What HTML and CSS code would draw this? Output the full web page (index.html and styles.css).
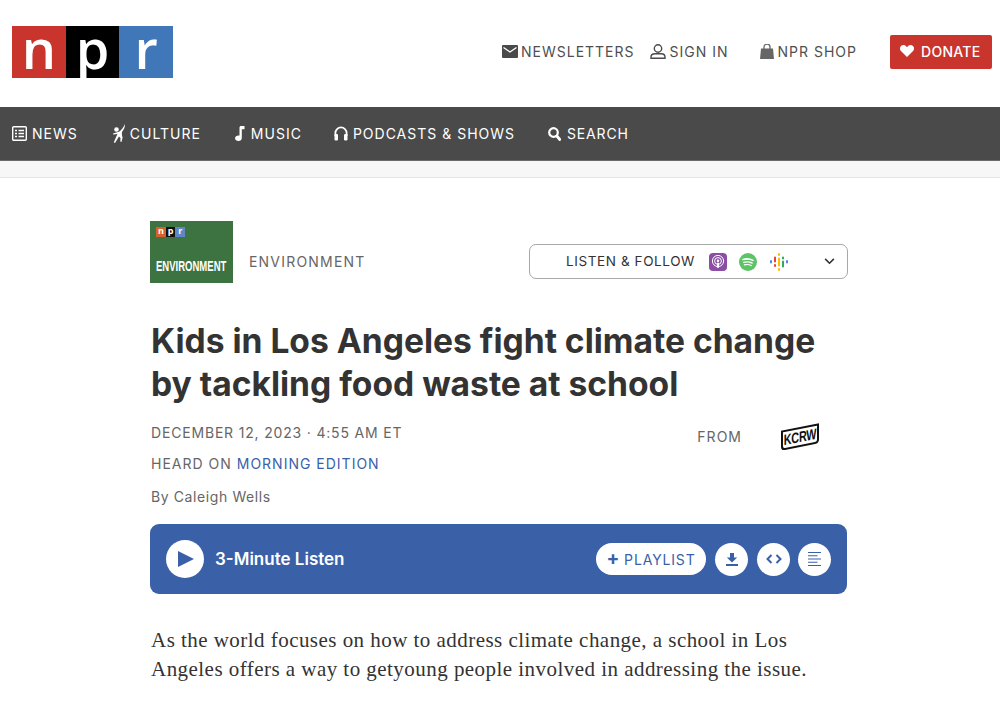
FILE: index.html
```html
<!DOCTYPE html>
<html lang="en">
<head>
<meta charset="utf-8">
<title>Kids in Los Angeles fight climate change by tackling food waste at school</title>
<link rel="stylesheet" href="styles.css">
</head>
<body>
<header class="top">
  <a class="logo"><span class="l-n">n</span><span class="l-p">p</span><span class="l-r">r</span></a>
  <nav class="util">
    <a class="util-link nl"><svg class="ui" viewBox="0 0 16 13" width="16" height="13"><path fill="#4a4a4a" d="M1 0h14a1 1 0 0 1 1 1v11a1 1 0 0 1-1 1H1a1 1 0 0 1-1-1V1a1 1 0 0 1 1-1z"/><path fill="none" stroke="#fff" stroke-width="1.400" d="M1.500 2.500 8 7l6.500-4.500"/></svg>NEWSLETTERS</a>
    <a class="util-link si"><svg class="ui" viewBox="0 0 16 15" width="16" height="15"><circle cx="8" cy="4.500" r="3.700" fill="none" stroke="#4a4a4a" stroke-width="1.400"/><path fill="none" stroke="#4a4a4a" stroke-width="1.400" d="M1 14.200v-1.200c0-2 1.800-3.300 3.800-3.300h6.400c2 0 3.800 1.300 3.800 3.300v1.200z"/></svg>SIGN IN</a>
    <a class="util-link sh"><svg class="ui" viewBox="0 0 14 15" width="14" height="15"><path fill="#666" d="M1 4.500h12l1 10.500H0z"/><path fill="none" stroke="#666" stroke-width="1.300" d="M4 6V3a3 3 0 0 1 6 0v3"/></svg>NPR SHOP</a>
    <a class="donate"><svg viewBox="0 0 14 12" width="14" height="12"><path fill="#fff" d="M7 12 1.200 6.300C-.4 4.700-.4 2.300 1 1c1.500-1.400 3.800-1.300 5.100.2L7 2.200l.9-1C9.200-.3 11.500-.4 13 1c1.400 1.300 1.400 3.700-.2 5.300z"/></svg>DONATE</a>
  </nav>
</header>
<nav class="main">
  <a class="m-link news"><svg viewBox="0 0 15 15" width="15" height="15"><rect x=".7" y=".7" width="13.600" height="13.600" rx="1" fill="none" stroke="#fff" stroke-width="1.400"/><path stroke="#fff" stroke-width="1.500" d="M3 4.500h2M6.500 4.500H12M3 7.500h2M6.500 7.500H12M3 10.500h2M6.500 10.500H12"/></svg>NEWS</a>
  <a class="m-link culture"><svg viewBox="0 0 13 19" width="13" height="19"><circle cx="3.500" cy="5.500" r="2.300" fill="#fff"/><path fill="#fff" d="M12 0c0 3-1 5.500-3 8-.3 2 0 4 .6 5.500L8.500 18l-1.200-.5.200-3.500L6 12.500 2 19l-1.200-.7L4 11l.5-1-4.300.5L0 9.500l6-1.700C8 6.500 10.500 3.500 12 0z"/></svg>CULTURE</a>
  <a class="m-link music"><svg viewBox="0 0 10 15" width="10" height="15"><path fill="#fff" d="M4.500 1.500C4.500.6 5.100 0 6 0h3.500v3.200H6.800v8.700c0 1.800-1.400 3.100-3.300 3.100C1.500 15 0 13.900 0 12.300s1.700-2.800 3.500-2.800c.4 0 .7 0 1 .1z"/></svg>MUSIC</a>
  <a class="m-link pod"><svg viewBox="0 0 14 15" width="14" height="15"><path fill="none" stroke="#fff" stroke-width="1.800" d="M1.400 10V7a5.600 5.600 0 0 1 11.200 0v3"/><rect x=".5" y="8" width="3.500" height="6.500" rx="1.200" fill="#fff"/><rect x="10" y="8" width="3.500" height="6.500" rx="1.200" fill="#fff"/></svg>PODCASTS &amp; SHOWS</a>
  <a class="m-link search"><svg viewBox="0 0 13 14" width="13" height="14"><circle cx="5.500" cy="5.500" r="4.300" fill="none" stroke="#fff" stroke-width="2.200"/><path stroke="#fff" stroke-width="2.800" stroke-linecap="round" d="m8.800 9 3 3.500"/></svg>SEARCH</a>
</nav>
<div class="strip"></div>
<main class="article">
  <div class="slug-row">
    <a class="badge">
      <span class="mini"><i class="m-n">n</i><i class="m-p">p</i><i class="m-r">r</i></span>
      <span class="badge-t">ENVIRONMENT</span>
    </a>
    <span class="slug">ENVIRONMENT</span>
    <button class="listen">
      <span class="listen-t">LISTEN &amp; FOLLOW</span>
      <svg class="pod-i" viewBox="0 0 18 18" width="18" height="18"><rect width="18" height="18" rx="4" fill="#8a4fa3"/><circle cx="9" cy="8" r="5.600" fill="none" stroke="#fff" stroke-width="1"/><circle cx="9" cy="8" r="3.400" fill="none" stroke="#fff" stroke-width="1"/><circle cx="9" cy="7.700" r="1.300" fill="#fff"/><rect x="8" y="9.500" width="2" height="5.500" rx="1" fill="#fff"/></svg>
      <svg class="spot-i" viewBox="0 0 18 18" width="18" height="18"><circle cx="9" cy="9" r="9" fill="#5ec269"/><path fill="none" stroke="#fff" stroke-width="1.600" stroke-linecap="round" d="M4 6.500c3.500-1 7-.7 10 .9"/><path fill="none" stroke="#fff" stroke-width="1.300" stroke-linecap="round" d="M4.700 9.300c3-.8 6-.5 8.500.8"/><path fill="none" stroke="#fff" stroke-width="1.100" stroke-linecap="round" d="M5.300 11.900c2.500-.6 5-.4 7 .7"/></svg>
      <svg class="goog-i" viewBox="0 0 20 18" width="20" height="18"><path stroke-width="2" stroke-linecap="round" fill="none" stroke="#4a8af0" d="M2 8v1.500"/><path stroke-width="2" stroke-linecap="round" fill="none" stroke="#ea4335" d="M6 4.500v4M6 12v1"/><path stroke-width="2" stroke-linecap="round" fill="none" stroke="#fbbc04" d="M10 1v1M10 5.500v7M10 16v1"/><path stroke-width="2" stroke-linecap="round" fill="none" stroke="#34a853" d="M14 4.500v1M14 8.500v5"/><path stroke-width="2" stroke-linecap="round" fill="none" stroke="#4a8af0" d="M18 8v1.500"/></svg>
      <svg class="chev" viewBox="0 0 12 8" width="11" height="7"><path fill="none" stroke="#333" stroke-width="1.800" d="m1 1 5 5 5-5"/></svg>
    </button>
  </div>
  <h1 class="headline">Kids in Los Angeles fight climate change by tackling food waste at school</h1>
  <div class="meta-row">
    <div class="meta">
      <div class="date">DECEMBER 12, 2023 · 4:55 AM ET</div>
      <div class="heard">HEARD ON <a class="me">MORNING EDITION</a></div>
      <div class="by">By Caleigh Wells</div>
    </div>
    <div class="from">
      <span class="from-t">FROM</span>
      <span class="kcrw"><span class="kcrw-t">KCRW</span></span>
    </div>
  </div>
  <div class="player">
    <button class="play"><svg viewBox="0 0 16 16" width="16" height="16"><path fill="#3a61a8" d="M0 0l16 8L0 16z"/></svg></button>
    <span class="dur">3-Minute Listen</span>
    <button class="pill"><span class="plus">+</span> PLAYLIST</button>
    <button class="round"><svg viewBox="0 0 12 13" width="12" height="13"><path fill="#3a61a8" d="M4 0h4v4.500h3.200L6 9.500.8 4.500H4z"/><rect y="11" width="12" height="2" fill="#3a61a8"/></svg></button>
    <button class="round round-b"><svg viewBox="0 0 16 10" width="16" height="10"><path fill="none" stroke="#3a61a8" stroke-width="2" d="M5.500 1 1.500 5l4 4M10.500 1l4 4-4 4"/></svg></button>
    <button class="round round-c"><svg viewBox="0 0 13 14" width="13" height="14"><path stroke="#3a61a8" stroke-width="1" d="M0 .5h13M0 3.750h9.500M0 7h13M0 10.250h9.500M0 13.500h13"/></svg></button>
  </div>
  <p class="lede">As the world focuses on how to address climate change, a school in Los Angeles offers a way to getyoung people involved in addressing the issue.</p>
</main>
</body>
</html>
```
FILE: styles.css
```css
* { box-sizing: border-box; }
html, body { margin: 0; padding: 0; background: #fff; overflow: hidden; }
body { font-family: Inter, "Liberation Sans", sans-serif; color: #333; height: 704px; }
a { text-decoration: none; color: inherit; }
button { font: inherit; border: 0; padding: 0; cursor: pointer; }
svg { display: block; flex: none; }

.top { height: 107px; display: flex; align-items: flex-start; justify-content: space-between; padding: 26px 8px 0 12px; }
.logo { display: flex; height: 52px; width: 161px; }
.logo span { flex: 1; color: #fff; font: 600 54px/44px "Open Sans", sans-serif; text-align: center; }
.l-n { background: #c9352c; }
.l-p { background: #000; }
.l-r { background: #3f77b8; }
.util { display: flex; align-items: center; height: 34px; margin-top: 9px; font-size: 14px; letter-spacing: 1px; color: #4f4f4f; }
.util-link { display: flex; align-items: center; gap: 4px; white-space: nowrap; margin-bottom: 2px; }
.nl { gap: 3px; margin-right: 15px; }
.si { margin-right: 31px; }
.sh { margin-right: 33px; }
.donate { display: flex; align-items: center; gap: 7px; width: 102px; height: 34px; padding: 0 0 2px 10px; border-radius: 2px; background: #c9352c; color: #fff; font-size: 14px; font-weight: 500; letter-spacing: .3px; }

.main { height: 54px; background: #4a4a4a; border-bottom: 1px solid #6a6a6a; display: flex; align-items: center; padding-left: 12px; color: #fff; font-size: 14px; letter-spacing: 1px; }
.m-link { display: flex; align-items: center; gap: 5px; white-space: nowrap; }
.news { margin-right: 35px; }
.culture { gap: 4px; margin-right: 34px; }
.music { gap: 6px; margin-right: 32px; }
.pod { gap: 5px; margin-right: 33px; }
.search { gap: 6px; letter-spacing: .85px; }
.strip { height: 17px; background: #f7f7f7; border-bottom: 1px solid #e4e4e4; }

.article { width: 696px; margin-left: 151px; }
.slug-row { display: flex; align-items: flex-end; margin-top: 43px; height: 62px; }
.badge { width: 83px; height: 62px; margin-left: -1px; margin-right: 16px; background: #3d7340; display: flex; flex-direction: column; justify-content: space-between; padding: 6px 0 10px 6px; }
.mini { display: flex; width: 29px; height: 10px; }
.mini i { flex: 1; font: 700 9px/8px "Open Sans", sans-serif; color: #fff; text-align: center; }
.m-n { background: #d8602c; }
.m-p { background: #111; }
.m-r { background: #5f86c7; }
.badge-t { font: 700 14px/14px "Liberation Sans", sans-serif; color: #fff; transform: scaleX(.68); transform-origin: left; white-space: nowrap; }
.slug { font-size: 14px; line-height: 20px; letter-spacing: 1.200px; color: #666; margin-bottom: 11px; }
.listen { margin-left: auto; margin-right: -1px; margin-bottom: 4px; width: 319px; height: 35px; background: #fff; border: 1px solid #a8a8a8; border-radius: 7px; display: flex; align-items: center; padding-left: 36px; font-size: 13.500px; letter-spacing: .6px; color: #333; }
.listen-t { margin-right: 14px; padding-bottom: 1px; white-space: nowrap; }
.pod-i { margin-right: 12px; }
.spot-i { margin-right: 12px; }
.chev { margin-left: auto; margin-right: 12px; }

.headline { margin: 36px 0 0; font-size: 33.600px; line-height: 43px; font-weight: 700; color: #333; }
.meta-row { display: flex; justify-content: space-between; margin-top: 17px; }
.meta { font-size: 14px; color: #666; }
.date { line-height: 22px; letter-spacing: .82px; }
.heard { line-height: 22px; margin-top: 9px; letter-spacing: 1px; }
.me { color: #3a61a8; }
.by { line-height: 22px; margin-top: 11px; letter-spacing: .6px; }
.from { display: flex; align-items: center; height: 28px; margin-right: 28px; }
.from-t { font-size: 14px; letter-spacing: 1px; color: #666; margin-right: 39px; }
.kcrw { display: block; width: 38px; height: 20px; margin-top: 2px; background: #fff; border: 2.500px solid #111; border-radius: 0 0 4px 4px; transform: skewY(-11deg); }
.kcrw-t { font: 700 15px/15px "Liberation Sans", sans-serif; color: #111; display: block; transform: scaleX(.72); text-align: center; margin: 0 -6px; letter-spacing: -.3px; }

.player { height: 70px; margin-top: 16px; margin-left: -1px; border-radius: 9px; background: #3a61a8; display: flex; align-items: center; padding: 0 16px; }
.play { width: 38px; height: 38px; border-radius: 50%; background: #fff; display: flex; align-items: center; justify-content: center; padding-left: 2px; margin-right: 11px; }
.dur { color: #fff; font-size: 17px; font-weight: 600; margin-right: auto; }
.pill { height: 32px; width: 110px; border-radius: 16px; background: #fff; color: #3a61a8; font-size: 14px; letter-spacing: .85px; margin-right: 9px; white-space: nowrap; }
.plus { font-weight: 700; font-size: 19px; line-height: 14px; letter-spacing: 0; }
.round { width: 33px; height: 33px; border-radius: 50%; background: #fff; display: flex; align-items: center; justify-content: center; }
.round-b { margin-left: 9px; }
.round-c { margin-left: 8px; }

.lede { margin: 32px 0 0; font: 400 21px/29px "Liberation Serif", serif; color: #333; letter-spacing: .46px; }
```
